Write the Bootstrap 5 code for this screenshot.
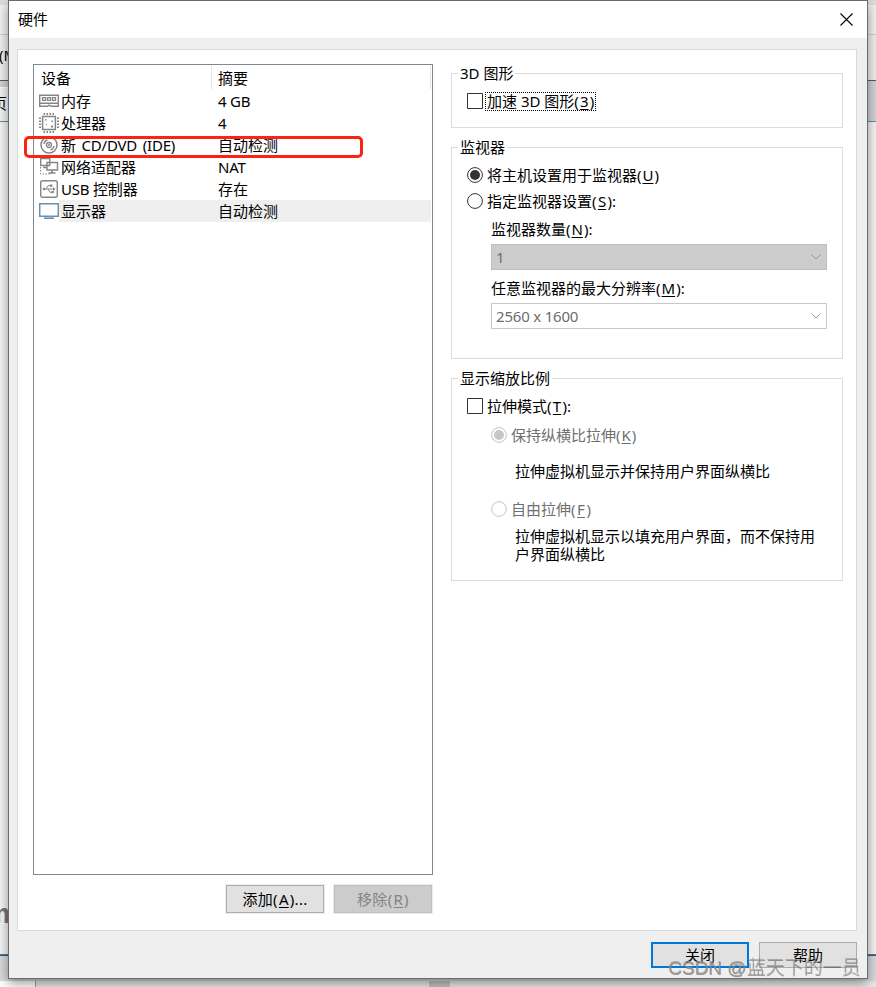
<!DOCTYPE html>
<html lang="zh-CN">
<head>
<meta charset="utf-8">
<meta name="viewport" content="width=device-width, initial-scale=1">
<title>硬件</title>
<link href="https://cdn.jsdelivr.net/npm/bootstrap@5.3.0/dist/css/bootstrap.min.css" rel="stylesheet">
<style>
body{width:876px;height:987px;font:15px/18px "Noto Sans","Noto Sans CJK SC",sans-serif;color:#000;background:#e9e9e9}
.lat{letter-spacing:-.2px}
.wide{word-spacing:2px}
/* windows behind the dialog */
.b0{height:5px;background:#dedede}
.b1{height:29px;background:#f2f2f2}
.b2{height:46px;background:#f0f0f0;border-top:1px solid #cfcfcf;padding-top:11px}
.b2 span{margin-left:-1px}
.b3{height:41px;background:#d2d3d5;border-top:1px solid #5c5c5e}
.b3 .tabpage{width:20px;margin-top:6px;height:34px;background:#f4f4f4;border-top:1px solid #fff;padding-top:6px}
.b3 .tabtext{margin-left:-8px}
.b4{height:833px;background:#f5f5f5;border-top:1px solid #5590ac}
.b4 .logo{font:bold 27px/30px "Liberation Sans",sans-serif;color:#777;margin-left:-14px;padding-top:777px}
.b5{height:27px;background:#d9dadd;border-top:1px solid #3b82a8;box-shadow:inset 0 1px #555}
.b6{height:6px;background:#e8e8e8}
.b6 .pane{width:36px;background:#fff;border-right:1px solid #999}
.b6 .thumb{width:21px;margin-left:393px;background:#c3c3c3}
/* dialog */
.dlg{left:8px;top:0;width:860px;height:979px;background:#efefef;border:1px solid #6b6b6b;box-shadow:0 4px 11px rgba(0,0,0,.42)}
.ttl{height:37px;padding:0 14px 1px 9px;background:#fff}
.pane-main{height:882px;margin:11px 10px 0 8px;border:1px solid #d9d9d9;padding:14px 13px 0 15px;gap:18px;background:#fff}
.dev{width:400px;height:811px;border:1px solid #828790;padding-right:1px}
.hd{height:25px;padding:1px 0 1px}
.c1{width:178px;padding-left:7px}
.hd .c1,.hd .c2{border-right:1px solid #e3e3e3;height:23px;line-height:24px}
.c2{padding-left:6px}
.itm{height:22px;line-height:22px;padding-left:5px}
.itm svg{width:20px;height:22px;flex:none}
.itm .fill{padding-left:2px}
.itm .nm{width:157px}
.itm .fill.sel{background:#efefef}
.hl{left:-10px;top:2px;width:339px;height:22px;border:3.5px solid #fb2313;border-radius:5px}
.btns{margin-top:10px;gap:10px;padding-right:1px}
.wbtn{width:98px;height:28px;padding:0;border:1px solid #adadad;border-radius:0;background:#e1e1e1;color:#000;font:inherit;line-height:25px}
.btns .wbtn{outline:1px solid #ececec;letter-spacing:.3px}
.btns .wbtn:disabled{background:#ccc;border-color:#bfbfbf;color:#838383;opacity:1}
.foot{padding:11px 10px 0 0;gap:10px}
.foot .wbtn{height:26px;line-height:24px}
.foot .pri{border:2px solid #0078d7;line-height:22px}
.grp{width:392px;border:1px solid #dcdcdc;padding:0 15px}
.lg{float:none;width:max-content;margin:0 0 10px -9px;padding:0 2px;background:#fff;font-size:15px;line-height:18px;height:18px}
.g1{height:64px}
.g2{height:221px;margin-top:10px}
.g3{height:212px;margin-top:10px}
.opt{height:18px;gap:4px}
.opt svg{width:16px;height:16px;flex:none}
.opt span{margin-bottom:1px}
.opt .foc{outline:1px dotted #000;height:17px;line-height:16px;padding:0 1px;margin:0 0 0 -1px}
.off{color:#6f6f6f}
.sub{padding-left:24px}
.l1{margin:10px 0 6px}
.l2{margin:9px 0 6px}
.cmb{width:336px;height:26px;border:1px solid #c8c8c8;padding:0 5px 0 4px;color:#6d6d6d;background:#fff}
.cmb.dis{background:#ccc;border-color:#bfbfbf}
.cmb span{margin-bottom:1px}
.desc{margin-left:48px;width:308px}
.k1{margin-top:11px}
.d1{margin-top:18px;margin-bottom:20px}
.d2{margin-top:9px}
u{display:inline-block;min-width:9px;margin:0 1px;text-align:center;text-underline-offset:2px;text-decoration-thickness:1px}
.wm{left:668px;top:955px;font:300 19px/26px "Liberation Sans","Noto Sans CJK SC",sans-serif;color:rgba(150,150,150,.75);text-shadow:.5px .5px 0 rgba(70,70,70,.55);white-space:nowrap}
</style>
</head>
<body class="position-relative overflow-hidden m-0">
<div class="backdrop">
  <div class="b0"></div>
  <div class="b1"></div>
  <div class="b2"><span>(M)</span></div>
  <div class="b3 d-flex"><div class="tabpage"><div class="tabtext">页</div></div></div>
  <div class="b4"><div class="logo">m</div></div>
  <div class="b5"></div>
  <div class="b6 d-flex"><div class="pane"></div><div class="thumb"></div></div>
</div>

<div class="dlg position-absolute">
  <div class="ttl d-flex align-items-center justify-content-between">
    <span>硬件</span>
    <svg width="13" height="13" viewBox="0 0 13 13" stroke="#000" stroke-width="1.1"><path d="M.5.5l12 12M12.5.5l-12 12"/></svg>
  </div>
  <div class="pane-main d-flex">
    <div>
      <div class="dev">
        <div class="hd d-flex"><div class="c1">设备</div><div class="c2 flex-grow-1">摘要</div></div>
        <div class="itm d-flex">
          <svg viewBox="0 0 20 22" fill="none" stroke="#858585"><path stroke-width="1.4" d="M.7 5.2h18.6v11.1H12l-1.7-1.1-1.7 1.1H.7zM1 13.3h18"/><path stroke-width="1.300" d="M3.500 7.700h3v2.600h-3zM8.500 7.700h3v2.600h-3zM13.500 7.700h3v2.600h-3z"/></svg>
          <div class="fill d-flex flex-grow-1"><span class="nm">内存</span><span class="lat">4 GB</span></div>
        </div>
        <div class="itm d-flex">
          <svg viewBox="0 0 20 22" fill="none" stroke="#858585"><path stroke-width="1.5" d="M3.6 4.6h12.8v12.8H3.6z"/><path stroke-width="2" stroke-dasharray="1.5 1.5" d="M4.5 2h11.5M4.5 20h11.5M1 5.500v11.500M19 5.500v11.500"/><path fill="#858585" stroke="none" d="M6 7h1.500v1.500H6zM12.500 8.500H14V10h-1.500zM12 13.500h2V15.500h-2zM7 12h1v1H7z"/></svg>
          <div class="fill d-flex flex-grow-1"><span class="nm">处理器</span><span>4</span></div>
        </div>
        <div class="itm d-flex position-relative">
          <svg viewBox="0 0 20 22" fill="none" stroke="#858585"><circle cx="10" cy="11" r="8" stroke-width="1.5"/><circle cx="10" cy="11" r="2.500" stroke-width="1.300"/><circle cx="10" cy="11" r=".7"/><path stroke-width="1.300" d="M5 10c.3-2.200 1.600-3.600 3.500-4M15 12c-.3 2.200-1.600 3.600-3.500 4"/></svg>
          <div class="fill d-flex flex-grow-1"><span class="nm lat wide">新 CD/DVD (IDE)</span><span>自动检测</span></div>
          <div class="hl position-absolute"></div>
        </div>
        <div class="itm d-flex">
          <svg viewBox="0 0 20 22" fill="none" stroke="#858585"><path stroke-width="1.4" d="M1.700 2.500h9v7h-9zM8 6.500h10.500v7.500H8z" fill="#fff"/><path stroke-width="1.600" d="M9.500 17h7M13 14v3M4 11.500h4"/><path stroke-dasharray="1.500 1.500" d="M1.500 11v7h10"/></svg>
          <div class="fill d-flex flex-grow-1"><span class="nm">网络适配器</span><span class="lat">NAT</span></div>
        </div>
        <div class="itm d-flex">
          <svg viewBox="0 0 20 22" fill="none" stroke="#858585"><rect x="1.700" y="2.700" width="16.600" height="16.600" rx="2" stroke-width="1.400"/><path d="M5 11h10M7 11l2-3.300h2.500M9 11l2 3.300h2"/><circle cx="5" cy="11" r="1.300" fill="#858585" stroke="none"/><path fill="#858585" stroke="none" d="M11 6.500h2.300v2.300H11zM12.500 13h2.300v2.300h-2.300zM14 9l2.500 2-2.500 2z"/></svg>
          <div class="fill d-flex flex-grow-1"><span class="nm lat">USB 控制器</span><span>存在</span></div>
        </div>
        <div class="itm d-flex">
          <svg viewBox="0 0 20 22" fill="none" stroke="#6c90aa"><path stroke-width="1.500" d="M.7 3.700h18.600v12.600H.7z"/><path stroke-width="1.600" d="M5 18.200h10"/></svg>
          <div class="fill sel d-flex flex-grow-1"><span class="nm">显示器</span><span>自动检测</span></div>
        </div>
      </div>
      <div class="btns d-flex justify-content-end">
        <button class="btn wbtn">添加(<u>A</u>)...</button>
        <button class="btn wbtn" disabled>移除(<u>R</u>)</button>
      </div>
    </div>
    <div>
      <fieldset class="grp g1">
        <legend class="lg">3D 图形</legend>
        <label class="opt d-flex align-items-center"><svg viewBox="0 0 16 16"><path fill="#fff" stroke="#333" d="M.5.5h15v15H.5z"/></svg><span class="foc">加速 3D 图形(<u>3</u>)</span></label>
      </fieldset>
      <fieldset class="grp g2">
        <legend class="lg">监视器</legend>
        <label class="opt d-flex align-items-center"><svg viewBox="0 0 16 16"><circle cx="8" cy="8" r="7.400" fill="#fff" stroke="#333"/><circle cx="8" cy="8" r="5" fill="#333"/></svg><span>将主机设置用于监视器(<u>U</u>)</span></label>
        <label class="opt d-flex align-items-center mt-2"><svg viewBox="0 0 16 16"><circle cx="8" cy="8" r="7.400" fill="#fff" stroke="#333"/></svg><span>指定监视器设置(<u>S</u>):</span></label>
        <div class="sub">
          <div class="l1">监视器数量(<u>N</u>):</div>
          <div class="cmb dis d-flex align-items-center justify-content-between"><span>1</span><svg width="10" height="6" fill="none" stroke="#999"><path d="M.5.5L5 5 9.500.5"/></svg></div>
          <div class="l2">任意监视器的最大分辨率(<u>M</u>):</div>
          <div class="cmb d-flex align-items-center justify-content-between"><span class="lat">2560 x 1600</span><svg width="10" height="6" fill="none" stroke="#999"><path d="M.5.5L5 5 9.500.5"/></svg></div>
        </div>
      </fieldset>
      <fieldset class="grp g3">
        <legend class="lg">显示缩放比例</legend>
        <label class="opt d-flex align-items-center"><svg viewBox="0 0 16 16"><path fill="#fff" stroke="#333" d="M.5.5h15v15H.5z"/></svg><span>拉伸模式(<u>T</u>):</span></label>
        <label class="opt d-flex align-items-center off sub k1"><svg viewBox="0 0 16 16"><circle cx="8" cy="8" r="7.400" fill="#fff" stroke="#c4c4c4"/><circle cx="8" cy="8" r="5" fill="#c6c6c6"/></svg><span>保持纵横比拉伸(<u>K</u>)</span></label>
        <div class="desc d1">拉伸虚拟机显示并保持用户界面纵横比</div>
        <label class="opt d-flex align-items-center off sub"><svg viewBox="0 0 16 16"><circle cx="8" cy="8" r="7.400" fill="#fff" stroke="#c4c4c4"/></svg><span>自由拉伸(<u>F</u>)</span></label>
        <div class="desc d2">拉伸虚拟机显示以填充用户界面，而不保持用户界面纵横比</div>
      </fieldset>
    </div>
  </div>
  <div class="foot d-flex justify-content-end">
    <button class="btn wbtn pri">关闭</button>
    <button class="btn wbtn">帮助</button>
  </div>
</div>
<div class="wm position-absolute">CSDN @蓝天下的一员</div>
<script src="https://cdn.jsdelivr.net/npm/bootstrap@5.3.0/dist/js/bootstrap.bundle.min.js"></script>
</body>
</html>
